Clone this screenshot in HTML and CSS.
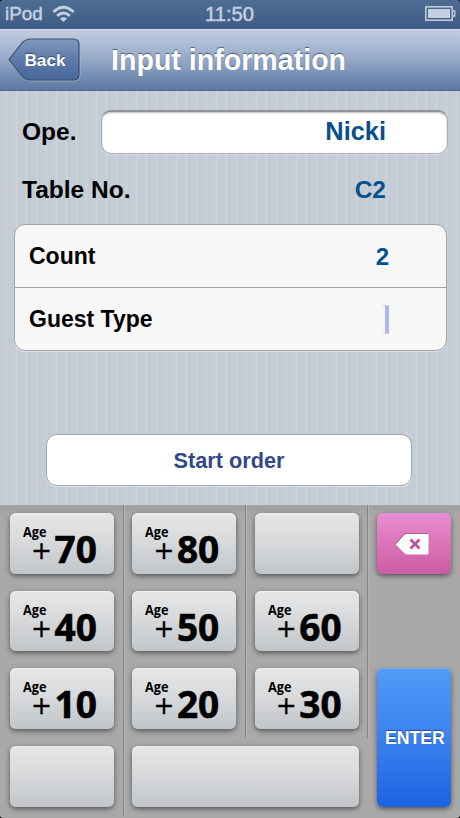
FILE: index.html
```html
<!DOCTYPE html>
<html lang="en">
<head>
<meta charset="utf-8">
<title>Input information</title>
<link rel="stylesheet" href="styles.css">
</head>
<body>
<div class="screen">
  <div class="status">
    <div class="carrier">iPod
      <svg class="wifi" width="23" height="18" viewBox="0 0 23 18" fill="none" stroke="currentColor" stroke-width="2.8"><path d="M1.4 7Q11.5-2.5 21.6 7"/><path d="M5.2 10.9Q11.5 5.2 17.8 10.9"/><path d="M11.5 17L8 13.5Q11.5 10.8 15 13.5Z" fill="currentColor" stroke="none"/></svg>
    </div>
    <div class="clock">11:50</div>
    <svg class="battery" width="31" height="16" viewBox="0 0 31 16"><rect x=".8" y=".8" width="26.4" height="13.4" fill="none" stroke="currentColor" stroke-width="1.5"/><rect x="3" y="3" width="22" height="9" fill="currentColor"/><path d="M27.5 5h2.2v5h-2.2" fill="none" stroke="currentColor" stroke-width="1.4"/></svg>
  </div>
  <header class="nav">
    <button class="back">
      <svg class="back-shape" width="73" height="44" viewBox="0 0 73 44">
        <defs><linearGradient id="backFill" x1="0" y1="0" x2="0" y2="1"><stop offset="0" stop-color="#8299bd"/><stop offset=".5" stop-color="#5d7aaa"/><stop offset="1" stop-color="#466798"/></linearGradient></defs>
        <path d="M1.5 22.5L15 5.5Q18.500 2 23 2H66Q72 2 72 8V37Q72 43 66 43H23Q18.500 43 15 39.500Z" fill="none" stroke="#afbfd8" stroke-opacity=".65"/>
        <path d="M1 21.500L14.500 4.500Q18 1 22.500 1H65.500Q71 1 71 6.500V36.500Q71 42 65.500 42H22.500Q18 42 14.500 38.500Z" fill="url(#backFill)" stroke="#3c5272" stroke-width="1.200"/>
      </svg>
      <span class="back-label">Back</span>
    </button>
    <h1 class="title">Input information</h1>
  </header>
  <main class="form">
    <div class="row operator"><label class="label">Ope.</label><div class="field">Nicki</div></div>
    <div class="row table-no"><span class="label">Table No.</span><span class="value">C2</span></div>
    <div class="group">
      <div class="cell"><span>Count</span><span class="cell-value">2</span></div>
      <div class="cell"><span>Guest Type</span><span class="caret"></span></div>
    </div>
    <button class="start">Start order</button>
  </main>
  <section class="keypad">
    <div class="key sep"><span class="age">Age</span><span class="plus">+</span><span class="num">70</span></div>
    <div class="key sep"><span class="age">Age</span><span class="plus">+</span><span class="num">80</span></div>
    <div class="key sep"></div>
    <div class="key delete"><svg width="34" height="23" viewBox="0 0 34 23"><path d="M.5 11L9 1.500Q10.500 0 12.500 0H32Q33.500 0 33.500 1.500V20Q33.500 21.500 32 21.500H12.500Q10.500 21.500 9 20Z" fill="#fff"/><path d="M.5 11L9 1.500Q10.500 .4 12.500 .4H33" fill="none" stroke="#8a3f70" stroke-width=".9"/><path d="M15.500 6.500L24.500 15.500M24.500 6.500L15.500 15.500" stroke="#bd5594" stroke-width="2.800"/></svg></div>
    <div class="key sep"><span class="age">Age</span><span class="plus">+</span><span class="num">40</span></div>
    <div class="key sep"><span class="age">Age</span><span class="plus">+</span><span class="num">50</span></div>
    <div class="key sep"><span class="age">Age</span><span class="plus">+</span><span class="num">60</span></div>
    <div></div>
    <div class="key sep"><span class="age">Age</span><span class="plus">+</span><span class="num">10</span></div>
    <div class="key sep"><span class="age">Age</span><span class="plus">+</span><span class="num">20</span></div>
    <div class="key sep"><span class="age">Age</span><span class="plus">+</span><span class="num">30</span></div>
    <div class="key enter">ENTER</div>
    <div class="key sep last"></div>
    <div class="key wide"></div>
  </section>
</div>
</body>
</html>
```
FILE: styles.css
```css
* { box-sizing: border-box; }
body { margin: 0; font-family: "Liberation Sans", Arial, sans-serif; font-weight: bold; color: #000; background: #000; }
button { border: 0; padding: 0; background: none; font: inherit; color: inherit; }
h1 { margin: 0; }
.screen { width: 460px; height: 818px; overflow: hidden; display: flex; flex-direction: column; border-radius: 3px; }

.status { height: 29px; flex: none; display: grid; grid-template-columns: 1fr auto 1fr; align-items: center; padding: 0 4px 1px 5px; background: linear-gradient(#4f6c93, #3f5d84); color: #c3d0e1; font-size: 19px; font-weight: normal; -webkit-text-stroke: .5px currentColor; }
.carrier { display: flex; align-items: center; gap: 9px; font-size: 18.8px; }
.clock { font-size: 20.3px; padding-right: 2px; }
.battery { justify-self: end; }

.nav { height: 62px; flex: none; display: flex; align-items: center; gap: 30px; padding-left: 8px; background: linear-gradient(#c0cce0 0, #b0bed6 20%, #8fa4c4 55%, #6c85ac 85%, #5b77a2 100%); border-top: 1px solid #d0dae8; border-bottom: 1px solid #536b91; color: #fff; }
.back { display: grid; width: 73px; height: 44px; }
.back-shape, .back-label { grid-area: 1 / 1; }
.back-label { place-self: center; padding: 0 0 1px 1px; font-size: 17.2px; line-height: 20px; text-shadow: 0 -1px 1px #34496b; }
.title { font-size: 28.6px; line-height: 32px; text-shadow: 0 -1px 1px #4c5d7a; padding-bottom: 1px; white-space: nowrap; }

.form { height: 414px; flex: none; padding-top: 19px; background: repeating-linear-gradient(90deg, #c4ccd5 0, #c4ccd5 5px, #cbd2d9 6px, #cbd2d9 7px, #c4ccd5 8px, #c2cad4 10px); }
.row { display: flex; align-items: center; justify-content: space-between; padding-left: 22px; font-size: 24.5px; }
.operator { height: 44px; padding-right: 12px; }
.field { width: 347px; height: 44px; padding-right: 61px; border-radius: 10px; border: 1px solid #aaadb1; border-top: 2px solid #8f9296; background: #fff; box-shadow: inset 0 1px 2px #bbb, 0 1px 0 #d8dde2; text-align: right; line-height: 38px; color: #07508d; font-size: 25.4px; }
.table-no { height: 70px; padding: 2px 74px 0 22px; }
.value { color: #07508d; }
.group { margin: 0 13px 0 14px; height: 127px; border: 1.500px solid #a0a4a9; border-radius: 11px; background: #f7f7f7; box-shadow: 0 1px 0 #dde1e5; display: grid; grid-template-rows: 62px 1fr; font-size: 23px; }
.cell { display: flex; align-items: center; justify-content: space-between; padding: 1px 57px 0 14px; }
.cell + .cell { border-top: 1px solid #9ea1a5; padding-top: 1px; }
.cell-value { color: #07508d; font-size: 24px; }
.caret { width: 6px; height: 29px; background: linear-gradient(90deg, transparent 2px, #b2b6ed 2px) ; border-block: 1px solid #ced0f2; }
.start { display: block; margin: 83px auto 0 46px; width: 366px; height: 52px; border: 1.500px solid #a1a4a8; border-radius: 11px; background: #fff; box-shadow: 0 1px 0 #e3e6e9; color: #33488a; font-size: 21.700px; line-height: 48px; padding-top: 1px; }

.keypad { height: 313px; flex: none; display: grid; grid-template-columns: 104px 104px 104px 73.500px; grid-template-rows: repeat(4, 60.500px); column-gap: 18.400px; row-gap: 17.200px; padding: 7px 0 0 10px; background: linear-gradient(#9f9f9f, #a9a9a9 10px, #a9a9a9); border-top: 1px solid #a8a8a8; }
.key { position: relative; border-radius: 6px; background: linear-gradient(#e5e6e7, #d8dadc 45%, #c2c6c9); box-shadow: 0 2px 5px #555, inset 0 1px 0 #eee; font-family: "Open Sans", "Noto Sans", sans-serif; }
.sep::after { content: ""; position: absolute; left: 112.500px; top: -8px; width: 1px; height: 78px; background: #858585; box-shadow: 1px 0 #b3b3b3; }
.age, .plus, .num { position: absolute; line-height: 1; }
.age { left: 13px; top: 12px; font-size: 13.800px; transform: scaleX(.92); transform-origin: left; }
.plus { left: 21px; top: 25px; font-family: "DejaVu Sans", sans-serif; font-size: 25px; font-weight: normal; -webkit-text-stroke: .3px #000; }
.num { left: 44.500px; top: 17px; font-size: 37px; -webkit-text-stroke: .6px #000; }
.delete { display: grid; place-items: center; padding: 2px 3px 0 0; background: linear-gradient(#e78ed4, #dc74b8 50%, #cd5ba2); box-shadow: 0 2px 5px #555; }
.enter { grid-row: span 2; display: grid; place-items: center; background: linear-gradient(#529bf7, #3b82ef 50%, #1d63e2); box-shadow: 0 2px 5px #555, inset 0 1px 0 #79aef0; color: #fff; font-family: "Liberation Sans", Arial, sans-serif; font-size: 17.700px; padding: 3px 0 0 2px; text-shadow: 0 -1px 1px #234d92; }
.wide { grid-column: span 2; }
```
